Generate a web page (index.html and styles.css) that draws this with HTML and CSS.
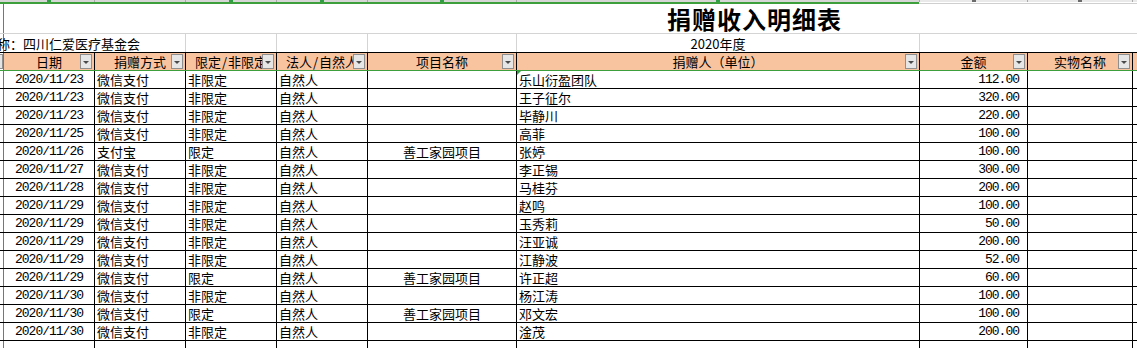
FILE: index.html
```html
<!DOCTYPE html>
<html lang="zh-CN">
<head>
<meta charset="utf-8">
<title>捐赠收入明细表</title>
<link rel="stylesheet" href="styles.css">
</head>
<body>
<div class="sheet">
  <div class="colbar">
    <div class="cb c0 sel"></div>
    <div class="cb c1 sel tick"></div>
    <div class="cb c2 sel sep"></div>
    <div class="cb c3 sel sep tick"></div>
    <div class="cb c4 sel sep tick"></div>
    <div class="cb c5 sel sep tick"></div>
    <div class="cb c6 sel sep tick"></div>
    <div class="cb c7 sep tick dark"></div>
    <div class="cb c8 sep tick dark"></div>
    <div class="cb c9 sep"></div>
  </div>
  <div class="selline"><div class="sel-on"></div><div class="sel-off"></div></div>

  <div class="row title-row">
    <div class="cell c0"></div>
    <div class="cell rest frz"><span class="title">捐赠收入明细表</span></div>
  </div>

  <div class="row info-row">
    <div class="cell c0"></div>
    <div class="cell c12 frz"><span class="org">称：四川仁爱医疗基金会</span></div>
    <div class="cell c3"></div>
    <div class="cell c4"></div>
    <div class="cell c5"></div>
    <div class="cell c6 ctr">2020年度</div>
    <div class="cell rest"></div>
  </div>

  <div class="row head-row">
    <div class="cell c0"><span class="stub"></span></div>
    <div class="cell c1 frz"><span class="htxt">日期</span><span class="fbtn"></span></div>
    <div class="cell c2"><span class="htxt">捐赠方式</span><span class="fbtn"></span></div>
    <div class="cell c3"><span class="htxt">限定<span class="sl">/</span>非限定</span><span class="fbtn"></span></div>
    <div class="cell c4"><span class="htxt">法人<span class="sl">/</span>自然人</span><span class="fbtn"></span></div>
    <div class="cell c5"><span class="htxt">项目名称</span><span class="fbtn"></span></div>
    <div class="cell c6"><span class="htxt">捐赠人（单位）</span><span class="fbtn"></span></div>
    <div class="cell c7"><span class="htxt">金额</span><span class="fbtn"></span></div>
    <div class="cell c8"><span class="htxt">实物名称</span><span class="fbtn"></span></div>
    <div class="cell c9"></div>
  </div>

  <div class="body">
    <div class="row data"><div class="cell c0"></div><div class="cell c1 frz num ctr">2020/11/23</div><div class="cell c2 txt">微信支付</div><div class="cell c3 txt">非限定</div><div class="cell c4 txt">自然人</div><div class="cell c5 ctr"></div><div class="cell c6 txt note">乐山衍盈团队</div><div class="cell c7 num amt">112.00</div><div class="cell c8"></div><div class="cell c9"></div></div>
    <div class="row data"><div class="cell c0"></div><div class="cell c1 frz num ctr">2020/11/23</div><div class="cell c2 txt">微信支付</div><div class="cell c3 txt">非限定</div><div class="cell c4 txt">自然人</div><div class="cell c5 ctr"></div><div class="cell c6 txt">王子征尔</div><div class="cell c7 num amt">320.00</div><div class="cell c8"></div><div class="cell c9"></div></div>
    <div class="row data"><div class="cell c0"></div><div class="cell c1 frz num ctr">2020/11/23</div><div class="cell c2 txt">微信支付</div><div class="cell c3 txt">非限定</div><div class="cell c4 txt">自然人</div><div class="cell c5 ctr"></div><div class="cell c6 txt">毕静川</div><div class="cell c7 num amt">220.00</div><div class="cell c8"></div><div class="cell c9"></div></div>
    <div class="row data"><div class="cell c0"></div><div class="cell c1 frz num ctr">2020/11/25</div><div class="cell c2 txt">微信支付</div><div class="cell c3 txt">非限定</div><div class="cell c4 txt">自然人</div><div class="cell c5 ctr"></div><div class="cell c6 txt">高菲</div><div class="cell c7 num amt">100.00</div><div class="cell c8"></div><div class="cell c9"></div></div>
    <div class="row data"><div class="cell c0"></div><div class="cell c1 frz num ctr">2020/11/26</div><div class="cell c2 txt">支付宝</div><div class="cell c3 txt">限定</div><div class="cell c4 txt">自然人</div><div class="cell c5 ctr">善工家园项目</div><div class="cell c6 txt">张婷</div><div class="cell c7 num amt">100.00</div><div class="cell c8"></div><div class="cell c9"></div></div>
    <div class="row data"><div class="cell c0"></div><div class="cell c1 frz num ctr">2020/11/27</div><div class="cell c2 txt">微信支付</div><div class="cell c3 txt">非限定</div><div class="cell c4 txt">自然人</div><div class="cell c5 ctr"></div><div class="cell c6 txt">李正锡</div><div class="cell c7 num amt">300.00</div><div class="cell c8"></div><div class="cell c9"></div></div>
    <div class="row data"><div class="cell c0"></div><div class="cell c1 frz num ctr">2020/11/28</div><div class="cell c2 txt">微信支付</div><div class="cell c3 txt">非限定</div><div class="cell c4 txt">自然人</div><div class="cell c5 ctr"></div><div class="cell c6 txt">马桂芬</div><div class="cell c7 num amt">200.00</div><div class="cell c8"></div><div class="cell c9"></div></div>
    <div class="row data"><div class="cell c0"></div><div class="cell c1 frz num ctr">2020/11/29</div><div class="cell c2 txt">微信支付</div><div class="cell c3 txt">非限定</div><div class="cell c4 txt">自然人</div><div class="cell c5 ctr"></div><div class="cell c6 txt">赵鸣</div><div class="cell c7 num amt">100.00</div><div class="cell c8"></div><div class="cell c9"></div></div>
    <div class="row data"><div class="cell c0"></div><div class="cell c1 frz num ctr">2020/11/29</div><div class="cell c2 txt">微信支付</div><div class="cell c3 txt">非限定</div><div class="cell c4 txt">自然人</div><div class="cell c5 ctr"></div><div class="cell c6 txt">玉秀莉</div><div class="cell c7 num amt">50.00</div><div class="cell c8"></div><div class="cell c9"></div></div>
    <div class="row data"><div class="cell c0"></div><div class="cell c1 frz num ctr">2020/11/29</div><div class="cell c2 txt">微信支付</div><div class="cell c3 txt">非限定</div><div class="cell c4 txt">自然人</div><div class="cell c5 ctr"></div><div class="cell c6 txt">汪亚诚</div><div class="cell c7 num amt">200.00</div><div class="cell c8"></div><div class="cell c9"></div></div>
    <div class="row data"><div class="cell c0"></div><div class="cell c1 frz num ctr">2020/11/29</div><div class="cell c2 txt">微信支付</div><div class="cell c3 txt">非限定</div><div class="cell c4 txt">自然人</div><div class="cell c5 ctr"></div><div class="cell c6 txt">江静波</div><div class="cell c7 num amt">52.00</div><div class="cell c8"></div><div class="cell c9"></div></div>
    <div class="row data"><div class="cell c0"></div><div class="cell c1 frz num ctr">2020/11/29</div><div class="cell c2 txt">微信支付</div><div class="cell c3 txt">限定</div><div class="cell c4 txt">自然人</div><div class="cell c5 ctr">善工家园项目</div><div class="cell c6 txt">许正超</div><div class="cell c7 num amt">60.00</div><div class="cell c8"></div><div class="cell c9"></div></div>
    <div class="row data"><div class="cell c0"></div><div class="cell c1 frz num ctr">2020/11/30</div><div class="cell c2 txt">微信支付</div><div class="cell c3 txt">非限定</div><div class="cell c4 txt">自然人</div><div class="cell c5 ctr"></div><div class="cell c6 txt">杨江涛</div><div class="cell c7 num amt">100.00</div><div class="cell c8"></div><div class="cell c9"></div></div>
    <div class="row data"><div class="cell c0"></div><div class="cell c1 frz num ctr">2020/11/30</div><div class="cell c2 txt">微信支付</div><div class="cell c3 txt">限定</div><div class="cell c4 txt">自然人</div><div class="cell c5 ctr">善工家园项目</div><div class="cell c6 txt">邓文宏</div><div class="cell c7 num amt">100.00</div><div class="cell c8"></div><div class="cell c9"></div></div>
    <div class="row data"><div class="cell c0"></div><div class="cell c1 frz num ctr">2020/11/30</div><div class="cell c2 txt">微信支付</div><div class="cell c3 txt">非限定</div><div class="cell c4 txt">自然人</div><div class="cell c5 ctr"></div><div class="cell c6 txt">淦茂</div><div class="cell c7 num amt">200.00</div><div class="cell c8"></div><div class="cell c9"></div></div>
    <div class="row tail"><div class="cell c0"></div><div class="cell c1 frz"></div><div class="cell c2"></div><div class="cell c3"></div><div class="cell c4"></div><div class="cell c5"></div><div class="cell c6"></div><div class="cell c7"></div><div class="cell c8"></div><div class="cell c9"></div></div>
  </div>
</div>
</body>
</html>
```

FILE: styles.css
```css
* { box-sizing: border-box; margin: 0; padding: 0; }

html, body {
  width: 1137px;
  height: 348px;
  overflow: hidden;
  background: #ffffff;
}

body {
  font-family: "Noto Sans CJK SC", "Noto Sans", sans-serif;
  font-size: 13px;
  color: #000;
}

.sheet { width: 1137px; }

/* column widths */
.c0 { width: 3px; flex: none; }
.c1 { width: 91px; flex: none; }
.c2 { width: 91px; flex: none; }
.c3 { width: 91px; flex: none; }
.c4 { width: 91px; flex: none; }
.c5 { width: 149px; flex: none; }
.c6 { width: 403px; flex: none; }
.c7 { width: 108px; flex: none; }
.c8 { width: 105px; flex: none; }
.c9 { flex: 1; }
.c12 { width: 182px; flex: none; }
.rest { flex: 1; }

/* column header strip */
.colbar { display: flex; height: 2px; background: #e9e9e9; }
.cb { height: 2px; display: flex; justify-content: center; }
.cb.sel { background: #d6d6d6; }
.cb.sep { border-left: 1px solid #a9a9a9; }
.cb.tick::after { content: ""; width: 4px; height: 2px; background: #2f9e44; }
.cb.tick.dark::after { background: #6b6b6b; }

.selline { display: flex; height: 2px; }
.sel-on { width: 919px; height: 2px; background: #3c9f3c; }
.sel-off { flex: 1; height: 2px; border-bottom: 1px solid #cfcfcf; }

/* rows */
.row { display: flex; }
.cell { border-left: 1px solid #000; white-space: nowrap; }
.cell.c0 { border-left: none; }
.cell.frz { border-left-color: #3c9f3c; }

.title-row { height: 30px; border-bottom: 1px solid #d4d4d4; }
.title {
  display: block;
  padding-left: 663px;
  padding-top: 1px;
  font-size: 24px;
  line-height: 27px;
  font-weight: 700;
  letter-spacing: 1px;
}

.info-row { height: 18px; line-height: 17px; }
.info-row .cell { border-left-color: #d4d4d4; }
.info-row .cell.frz { border-left-color: #3c9f3c; }
.org { display: block; margin-left: -7px; padding-top: 1px; }
.info-row .ctr { padding-top: 1px; }

.head-row {
  height: 19px;
  border-top: 1px solid #000;
  border-bottom: 1px solid #3c9f3c;
  background: #f8c4a0;
}
.head-row .cell { position: relative; line-height: 16px; }
.head-row .htxt { display: block; text-align: center; padding-top: 1px; }
.head-row .sl { padding: 0 1px; }
.head-row .c0 { background: #fff; }
.stub {
  display: block;
  margin-top: 1px;
  width: 3px;
  height: 15px;
  background: #e4e4e4;
  border-right: 1px solid #8f8f8f;
  border-top: 1px solid #8f8f8f;
  border-bottom: 1px solid #8f8f8f;
}
.fbtn {
  position: absolute;
  right: 2px;
  top: 1px;
  width: 12px;
  height: 15px;
  background: #e6e6e6;
  border: 1px solid #8f8f8f;
  display: flex;
  align-items: center;
  justify-content: center;
}
.fbtn::after {
  content: "";
  width: 0;
  height: 0;
  border-left: 3px solid transparent;
  border-right: 3px solid transparent;
  border-top: 3px solid #4a4a4a;
  margin-top: 2px;
}

.data { height: 18px; border-bottom: 1px solid #000; line-height: 16px; }
.data .cell { padding-top: 1px; }
.txt { padding-left: 2px; }
.ctr { text-align: center; }
.num {
  font-family: "Liberation Mono", monospace;
  font-size: 13px;
  letter-spacing: -1px;
}
.amt { text-align: right; padding-right: 8px; }
.note { position: relative; }
.note::before {
  content: "";
  position: absolute;
  left: 0;
  top: 0;
  border-top: 4px solid #2f9e44;
  border-right: 4px solid transparent;
}

.tail { height: 8px; }
```
